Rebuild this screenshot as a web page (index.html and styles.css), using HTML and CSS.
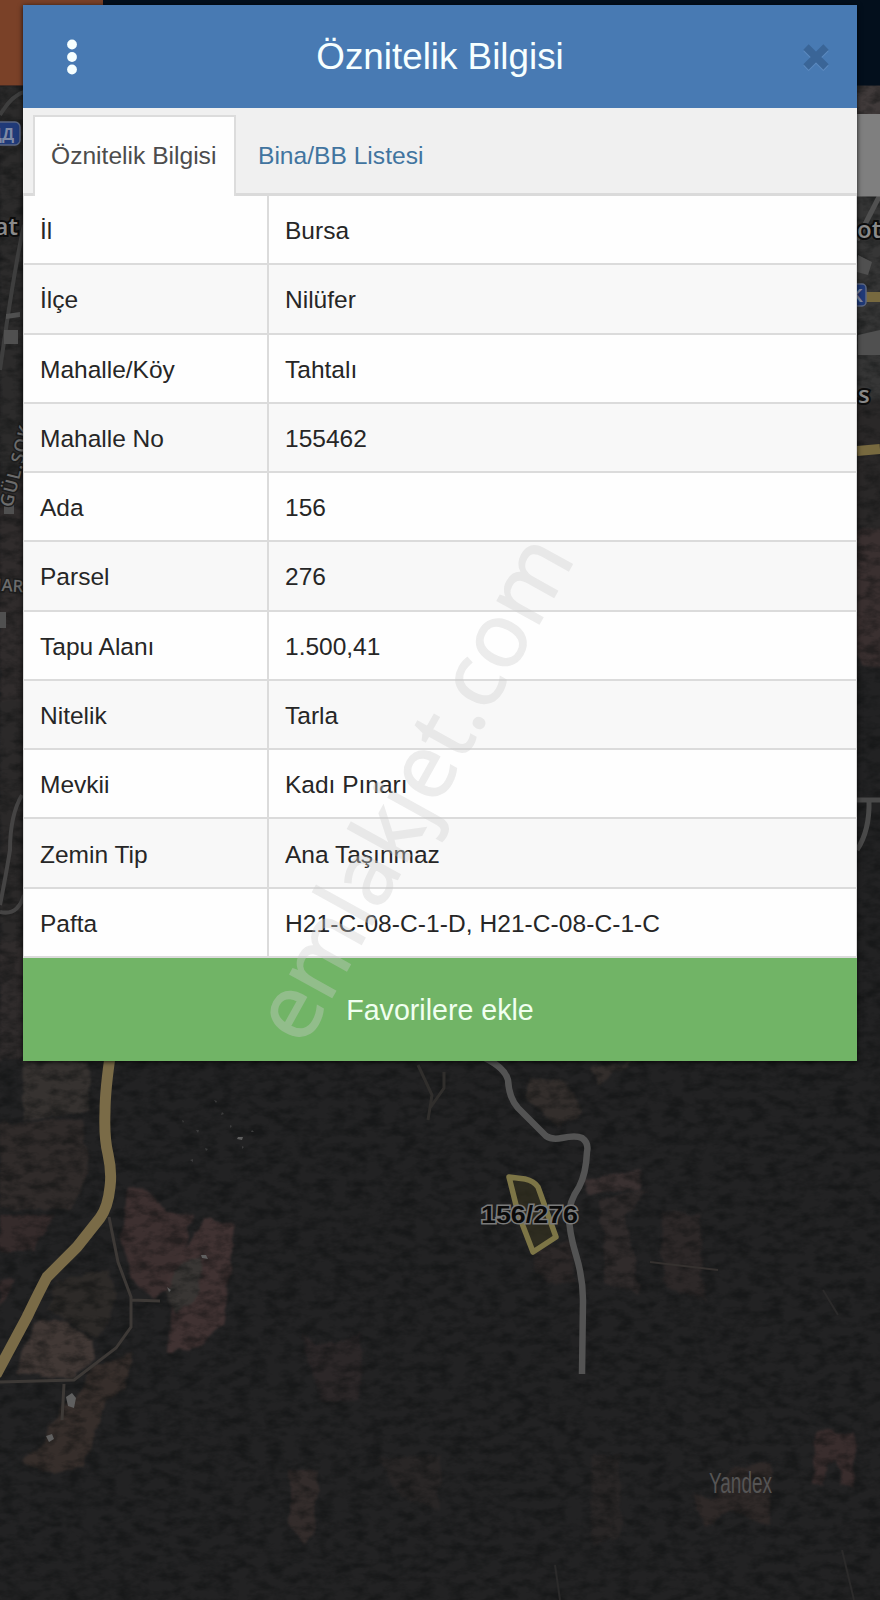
FILE: index.html
```html
<!DOCTYPE html>
<html lang="tr">

<head>
    <meta charset="UTF-8">
    <meta name="viewport" content="width=device-width, initial-scale=1.0">
    <title>Öznitelik Bilgisi</title>
    <link rel="stylesheet" href="styles.css">
</head>

<body>
    <!-- Map behind the dialog -->
    <svg class="map" width="880" height="1600" viewBox="0 0 880 1600">
        <defs>
            <filter id="forest" x="0" y="0" width="100%" height="100%" color-interpolation-filters="sRGB">
                <feTurbulence type="fractalNoise" baseFrequency="0.06 0.11" numOctaves="4" seed="4" />
                <feColorMatrix values="0 0 0 0 0.04  0 0 0 0 0.05  0 0 0 0 0.05  2.6 0 0 0 -1.05" />
            </filter>
            <filter id="soft" x="-5%" y="-5%" width="110%" height="110%" color-interpolation-filters="sRGB">
                <feTurbulence type="fractalNoise" baseFrequency="0.06" numOctaves="3" seed="9" result="n" />
                <feDisplacementMap in="SourceGraphic" in2="n" scale="10" xChannelSelector="R" yChannelSelector="G" result="d" />
                <feGaussianBlur in="d" stdDeviation="1.2" />
            </filter>
        </defs>
        <rect width="880" height="1600" fill="#222223" />

        <!-- fields -->
        <g filter="url(#soft)">
            <path fill="#2c2b2b" d="M0 86H30V480H0z" />
            <path fill="#302c2c" d="M0 480H30V700H0zM0 940H30V1060H0z" />
            <path fill="#2b2929" d="M0 700H30V940H0z" />
            <path fill="#403a3a" d="M850 84H890V120H850z" />
            <path fill="#363636" d="M850 190H890V400H850z" />
            <path fill="#2a2828" d="M850 400H890V530H850z" />
            <path fill="#3a3030" d="M850 535L890 525V670L862 665L850 650z" />
            <path fill="#363230" d="M24 1060L88 1062L90 1112L22 1120z" />
            <path fill="#302b2a" d="M0 1122L82 1120L90 1170L70 1210L0 1208z" />
            <path fill="#352b2b" d="M0 1215L52 1215L35 1250L0 1252zM0 1280L15 1280L0 1310z" />
            <path fill="#3d3030" d="M126 1188L147 1190L165 1212L194 1215L184 1250L168 1290L155 1298L132 1280L122 1240z" />
            <path fill="#403232" d="M206 1218L234 1225L230 1280L222 1325L195 1348L167 1352L172 1310L166 1280L190 1240z" />
            <path fill="#393634" d="M182 1262L205 1258L195 1300L176 1315L166 1290z" />
            <path fill="#2d2a28" d="M55 1280L112 1270L116 1300L98 1340L50 1310z" />
            <path fill="#413835" d="M35 1322L62 1320L92 1340L94 1360L72 1378L15 1374z" />
            <path fill="#362e2b" d="M90 1368L132 1352L128 1385L108 1400L94 1440L84 1466L58 1474L22 1464L44 1440L60 1410L84 1390z" />
            <path fill="#2c2728" d="M300 1335L318 1345L345 1340L358 1330L362 1355L360 1400L322 1402L312 1370z" />
            <path fill="#332c2b" d="M290 1472L318 1470L314 1530L302 1545L290 1520z" />
            <path fill="#292626" d="M380 1460L440 1455V1510L400 1495zM590 1456L620 1456L622 1535L592 1545z" />
            <path fill="#332e2c" d="M530 1078L565 1080L582 1112L558 1127L525 1100zM588 1067L630 1063L598 1085z" />
            <path fill="#3a3131" d="M585 1180L642 1172L640 1190L590 1192z" />
            <path fill="#302b2b" d="M600 1200L650 1188L625 1215L635 1260L640 1295L605 1285z" />
            <path fill="#2d2828" d="M536 1250L570 1240L578 1280L552 1285L534 1270zM660 1210L700 1215L705 1300L665 1290z" />
            <path fill="#392d2d" d="M817 1430L854 1434L854 1488L842 1485L838 1460L826 1465L822 1486L811 1482z" />
            <path fill="#2f2928" d="M692 1495L715 1500L730 1470L772 1462L768 1525L730 1512L705 1528z" />
        </g>
        <rect width="880" height="1600" filter="url(#forest)" opacity="0.45" />

        <!-- small tracks and buildings -->
        <g fill="none" stroke="#3d3936" stroke-width="3">
            <path d="M109 1217L118 1262L131 1297L131 1327L116 1348L74 1380L0 1382M131 1300L160 1301M64 1384L62 1420" />
            <path d="M418 1065L432 1095L428 1120M444 1072L444 1088L430 1108" stroke="#302e2c" />
            <path d="M650 1262L718 1270" stroke="#35312f" stroke-width="2" />
            <path d="M823 1290L838 1315M842 1550L854 1600M555 1565L560 1600" stroke="#2b2a2a" stroke-width="2" />
            <path d="M22 795Q10 815 10 850Q6 875 0 905M0 912Q18 916 24 895" stroke="#454444" stroke-width="4" />
            <path d="M0 370Q14 270 24 225M0 115Q12 95 24 92" stroke="#3e3e3e" stroke-width="4" />
            <path d="M856 800H880M869 800Q870 830 857 850" stroke="#494949" stroke-width="5" />
            <path d="M857 240L880 195" stroke="#505050" stroke-width="5" />
        </g>
        <g fill="#5f5f5f">
            <path d="M66 1397L72 1393L76 1398L74 1408L68 1406zM46 1436L52 1434L54 1439L49 1442zM238 1137L243 1137L242 1140L237 1139z" />
            <path d="M201 1255L206 1255L208 1259L202 1258zM167 1287L171 1290L169 1292z" />
            <path d="M4 330H18V344H4zM6 314L20 312V317L6 319zM4 504L14 500V514H4zM0 612H6V628H0zM858 255L872 262L868 275L857 272zM858 335L880 330V355H858z" fill="#505050" />
            <path d="M214 1100l3 1-1 2zM222 1112l2 2-3 1zM196 1130l3 0-1 3zM205 1148l3 1-2 2zM190 1160l3-1 0 3zM230 1125l2 1-2 2zM242 1146l2 1-2 2zM182 1120l2 1-1 2zM252 1130l2 2-3 0z" fill="#3c3c3d" />
        </g>

        <!-- roads -->
        <path class="road" stroke="#7a6b47" stroke-width="11" d="M111 1050Q105 1090 105 1112Q104 1138 108 1154Q112 1172 110 1187Q108 1207 100 1218L77 1247L47 1277Q40 1290 27 1317L-4 1375" />
        <path class="road" stroke="#535353" stroke-width="6.5" d="M485 1058Q505 1068 508 1080Q509 1098 518 1108L546 1136Q552 1140 562 1138Q576 1135 582 1138Q589 1143 587 1152Q586 1174 579 1187Q569 1202 569 1215Q569 1232 576 1255Q583 1278 583 1300L582 1374" />
        <path class="road" stroke="#77693f" stroke-width="10" d="M857 451L880 449M862 297H880" />

        <!-- parcel -->
        <path fill="#39351f" fill-opacity="0.55" stroke="#7d7546" stroke-width="5.5" stroke-linejoin="round" d="M509 1177L525 1179Q534 1181 538 1187L556 1237L533 1252L518 1213z" />

        <!-- page header and side control under the overlay -->
        <rect width="880" height="85.500" fill="#030f1c" />
        <rect width="103" height="85.500" fill="#7a4128" />
        <rect x="850" y="114" width="30" height="82.500" fill="#7f7f7f" />

        <rect x="-10" y="122" width="30" height="23" rx="5" fill="#203a78" stroke="#5b6680" stroke-width="1.500" />
        <rect x="840" y="284" width="26" height="22" rx="4" fill="#203a78" stroke="#5b6680" stroke-width="1.500" />
        <g class="road-number">
            <text x="14" y="140" font-size="17" text-anchor="end">ДД</text>
            <text x="850" y="302" font-size="18">K</text>
        </g>
        <g class="map-label">
            <text x="18" y="235" font-size="24" text-anchor="end">at</text>
            <text x="857" y="238" font-size="24">ot</text>
            <text x="858" y="403" font-size="24">s</text>
            <text class="street" transform="translate(12 508) rotate(-76)" font-size="18" letter-spacing="1">GÜL.SOK</text>
            <text class="street" x="-4" y="591" font-size="17" transform="rotate(3 0 590)">IAR</text>
        </g>
        <text class="parcel-label" x="481" y="1223" textLength="97" lengthAdjust="spacingAndGlyphs">156/276</text>
        <text class="yandex" x="709" y="1493" textLength="63" lengthAdjust="spacingAndGlyphs">Yandex</text>
    </svg>

    <div class="modal">
        <div class="modal-header">
            <button class="menu-button" aria-label="Menü">
                <svg width="12" height="36" viewBox="0 0 12 36" fill="#f6ffff">
                    <circle cx="6" cy="5.500" r="4.900" />
                    <circle cx="6" cy="18" r="4.900" />
                    <circle cx="6" cy="30.500" r="4.900" />
                </svg>
            </button>
            <h1>Öznitelik Bilgisi</h1>
            <button class="close-button" aria-label="Kapat">
                <svg width="28" height="28" viewBox="0 0 28 28" fill="none" stroke-width="7.500">
                    <path stroke="#5c8abf" d="M4 5.500L24 25.500M24 5.500L4 25.500" />
                    <path stroke="#3a6597" d="M4 4L24 24M24 4L4 24" />
                </svg>
            </button>
        </div>

        <div class="tabs">
            <a class="tab active">Öznitelik Bilgisi</a>
            <a class="tab">Bina/BB Listesi</a>
        </div>

        <table class="info-table">
            <tbody>
                <tr><td>İl</td><td>Bursa</td></tr>
                <tr><td>İlçe</td><td>Nilüfer</td></tr>
                <tr><td>Mahalle/Köy</td><td>Tahtalı</td></tr>
                <tr><td>Mahalle No</td><td>155462</td></tr>
                <tr><td>Ada</td><td>156</td></tr>
                <tr><td>Parsel</td><td>276</td></tr>
                <tr><td>Tapu Alanı</td><td>1.500,41</td></tr>
                <tr><td>Nitelik</td><td>Tarla</td></tr>
                <tr><td>Mevkii</td><td>Kadı Pınarı</td></tr>
                <tr><td>Zemin Tip</td><td>Ana Taşınmaz</td></tr>
                <tr><td>Pafta</td><td class="sheet">H21-C-08-C-1-D, H21-C-08-C-1-C</td></tr>
            </tbody>
        </table>

        <button class="favorite-button">Favorilere ekle</button>
    </div>

    <svg class="watermark" width="880" height="1600" viewBox="0 0 880 1600">
        <text transform="translate(304 1048) rotate(-61)">emlakjet.com</text>
    </svg>
</body>

</html>
```

FILE: styles.css
```css
body {
    font-family: "Liberation Sans", Arial, sans-serif;
    margin: 0;
    padding: 5px 23px 0;
    height: 1600px;
    box-sizing: border-box;
    background-color: #222223;
    overflow: hidden;
}

/* Map */
.map,
.watermark {
    position: absolute;
    top: 0;
    left: 0;
}

.watermark {
    pointer-events: none;
}

.road {
    fill: none;
    stroke-linejoin: round;
}

.road-number text {
    font-weight: bold;
    fill: #7f8aa5;
}

.map-label text {
    font-family: "Open Sans", sans-serif;
    font-weight: 600;
    fill: #8a8a8a;
    stroke: #0c0c0c;
    stroke-width: 4px;
    paint-order: stroke;
}

.map-label .street {
    fill: #6c6c6c;
    stroke: #1c1c1c;
    stroke-width: 3px;
}

.parcel-label {
    font-size: 24px;
    font-weight: bold;
    fill: #0a0a0a;
    stroke: #7a7a7a;
    stroke-width: 3px;
    paint-order: stroke;
}

.yandex {
    font-size: 30px;
    fill: #555454;
}

.watermark text {
    font-family: "Open Sans", sans-serif;
    font-size: 89.5px;
    fill: #cdcdcd;
    stroke: #cdcdcd;
    stroke-width: 1.5px;
    opacity: 0.36;
}

/* Dialog */
.modal {
    position: relative;
    width: 834px;
    height: 1056px;
    display: flex;
    flex-direction: column;
    background-color: #fefefe;
    box-shadow: 0 1px 5px rgba(0, 0, 0, 0.8);
}

.modal-header {
    height: 103px;
    flex: none;
    display: flex;
    align-items: center;
    justify-content: space-between;
    box-sizing: border-box;
    padding: 0 27px 0 43px;
    background-color: #487ab3;
}

.modal-header h1 {
    margin: 0;
    color: #f6ffff;
    font-size: 36.8px;
    font-weight: normal;
}

button {
    font-family: inherit;
    border: none;
    padding: 0;
    background: none;
    cursor: pointer;
}

.modal-header svg {
    display: block;
}

/* Tabs */
.tabs {
    height: 88px;
    flex: none;
    display: flex;
    box-sizing: border-box;
    padding: 7px 10px 0;
    background-color: #f0f0f0;
    border-bottom: 3px solid #dadada;
}

.tab {
    box-sizing: border-box;
    height: 81px;
    padding: 0 16px;
    border: 2px solid transparent;
    border-bottom: none;
    color: #41749f;
    font-size: 24.6px;
    line-height: 78px;
}

.tab.active {
    width: 203px;
    margin-right: 4px;
    background-color: #fefefe;
    border-color: #dcdcdc;
    color: #4c4c4c;
}

/* Attribute table */
.info-table {
    width: 834px;
    height: 762px;
    flex: none;
    table-layout: fixed;
    border-spacing: 0;
    border-left: 1px solid #dcdcdc;
    border-right: 1px solid #dcdcdc;
    color: #262626;
    font-size: 24.5px;
}

.info-table td {
    padding: 3px 15px 0 16px;
    border-bottom: 2px solid #dbdbdb;
}

.info-table td:first-child {
    width: 212px;
    border-right: 2px solid #dbdbdb;
}

.info-table tr:nth-child(even) {
    background-color: #f8f8f8;
}

.info-table .sheet {
    letter-spacing: 0.07px;
}

.favorite-button {
    flex: 1;
    padding-top: 2px;
    background-color: #71b466;
    color: #f0fff0;
    font-size: 28.6px;
}
```
